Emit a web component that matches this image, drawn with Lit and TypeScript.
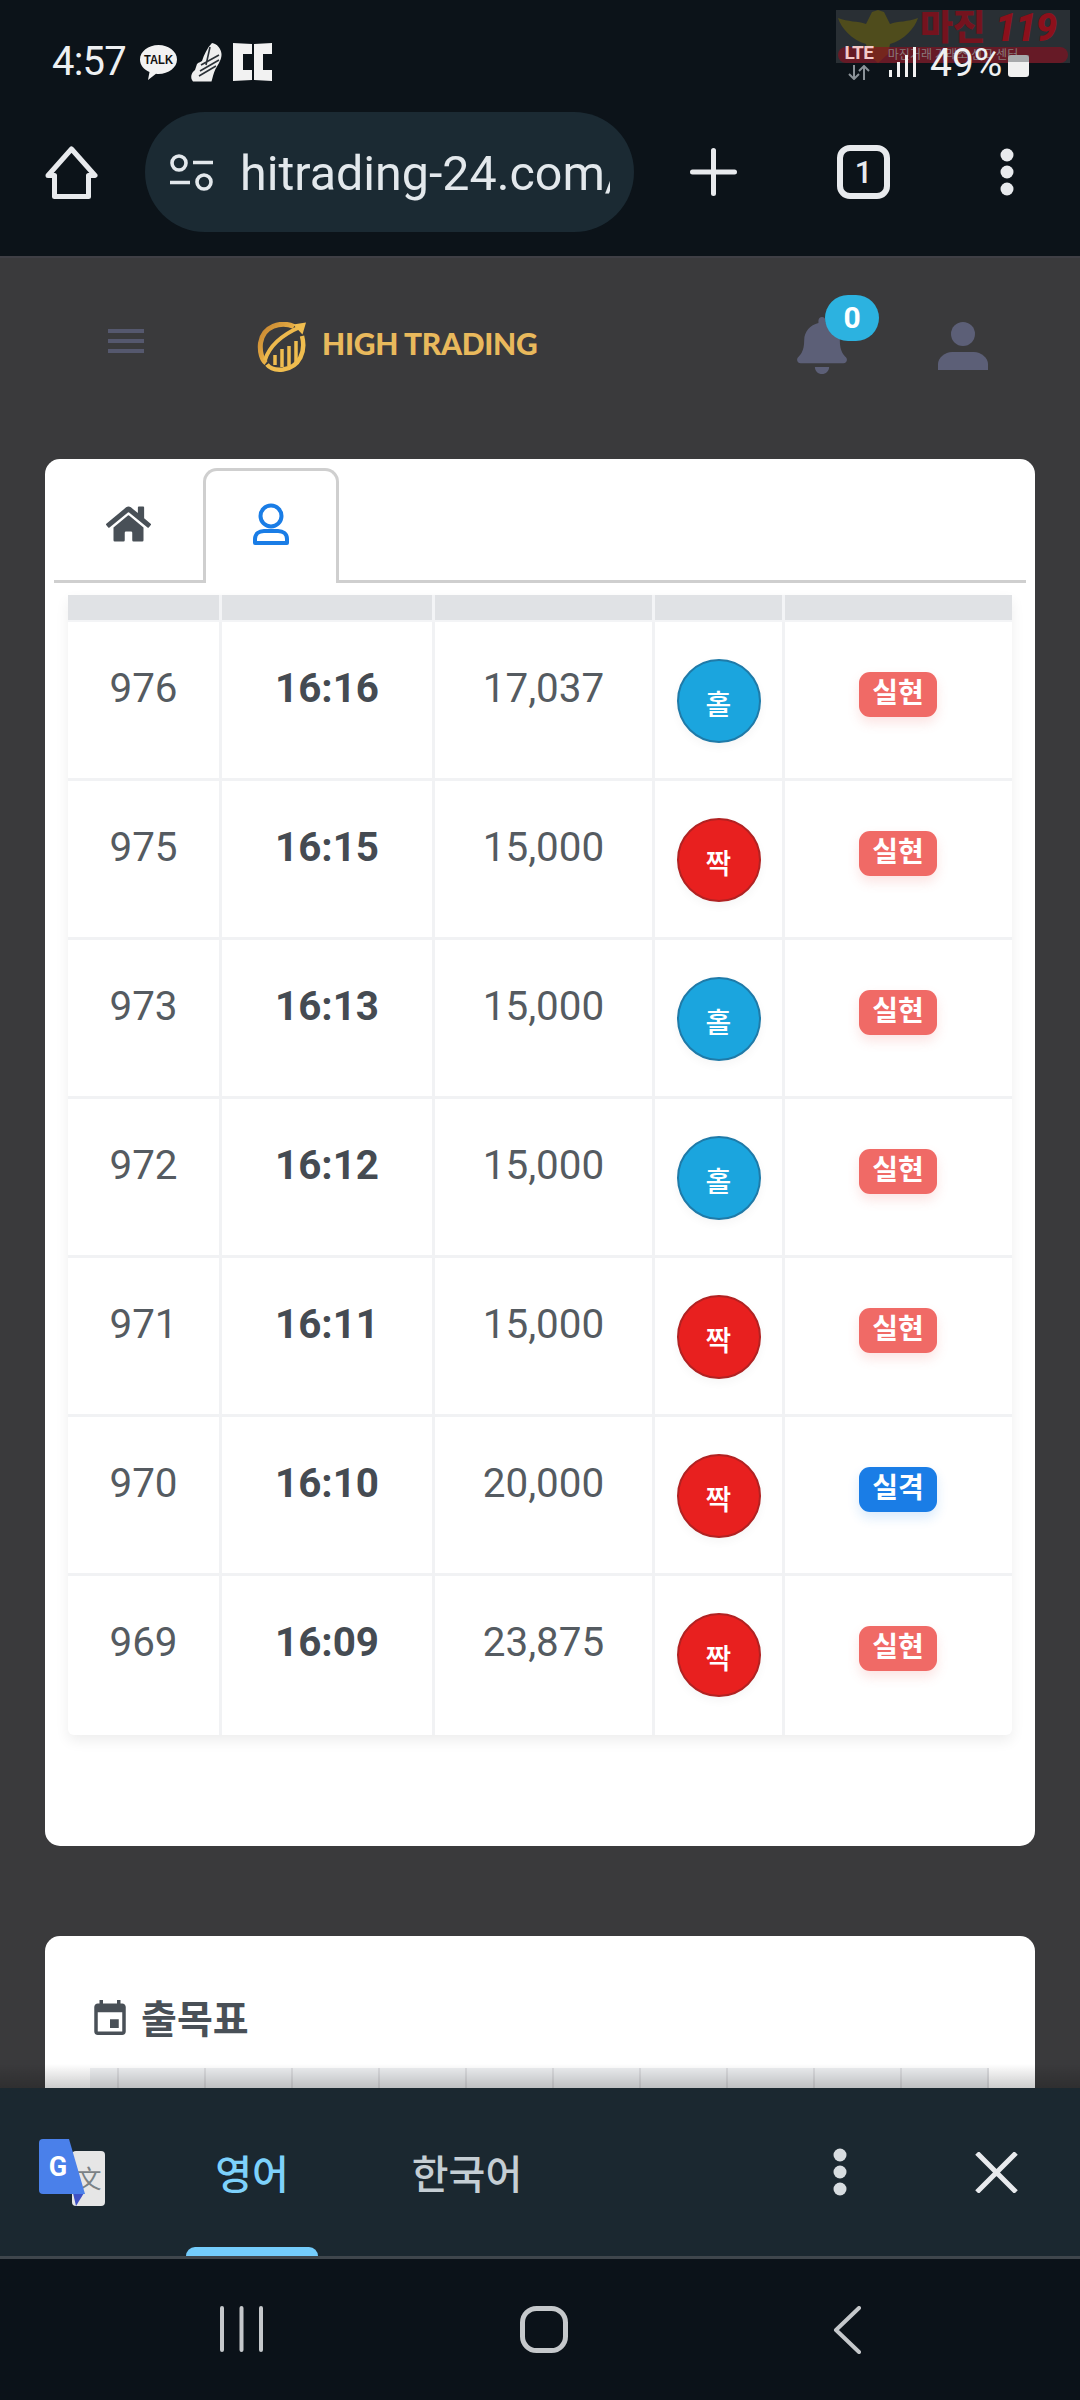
import { LitElement, html, css, svg } from "lit";
import { customElement } from "lit/decorators.js";

type Row = { id: string; time: string; amount: string; side: "홀" | "짝"; result: "실현" | "실격"; };

const ROWS: Row[] = [
  { id: "976", time: "16:16", amount: "17,037", side: "홀", result: "실현" },
  { id: "975", time: "16:15", amount: "15,000", side: "짝", result: "실현" },
  { id: "973", time: "16:13", amount: "15,000", side: "홀", result: "실현" },
  { id: "972", time: "16:12", amount: "15,000", side: "홀", result: "실현" },
  { id: "971", time: "16:11", amount: "15,000", side: "짝", result: "실현" },
  { id: "970", time: "16:10", amount: "20,000", side: "짝", result: "실격" },
  { id: "969", time: "16:09", amount: "23,875", side: "짝", result: "실현" },
];

const dots = svg`<svg width="14" height="48" viewBox="0 0 14 48"><circle cx="7" cy="7" r="6.5"/><circle cx="7" cy="24" r="6.5"/><circle cx="7" cy="41" r="6.5"/></svg>`;

@customElement("app-root")
export class AppRoot extends LitElement {
  static styles = css`
    :host { display: flex; flex-direction: column; width: 1080px; height: 2400px; overflow: hidden; position: relative; background: #3a3a3c; font-family: Roboto, "Noto Sans CJK KR", sans-serif; color: #495057; }
    svg { display: block; flex: none; }
    .top { background: #0c1319; flex: none; }
    .status { height: 90px; display: flex; align-items: flex-start; color: #eef0f2; padding-left: 52px; box-sizing: border-box; position: relative; z-index: 2; }
    .time { font-size: 40px; line-height: 40px; margin-top: 42px; letter-spacing: -0.8px; width: 88px; }
    .talk { margin-top: 45px; }
    .shoe { margin: 43px 0 0 13px; }
    .cc { margin: 43px 0 0 11px; }
    .sys { margin-left: auto; display: flex; align-items: flex-start; padding-right: 51px; position: relative; }
    .net { width: 32px; margin-top: 43px; font-size: 19px; line-height: 20px; font-weight: 700; color: #f3c9c9; letter-spacing: -0.5px; display: flex; flex-direction: column; align-items: center; }
    .sig { margin: 47px 0 0 14px; }
    .pct { font-size: 39px; line-height: 40px; margin: 43px 0 0 13px; width: 78px; white-space: nowrap; }
    .batt { margin: 55px 0 0 0; }
    .mark { position: absolute; left: 836px; top: 10px; width: 234px; height: 53px; background: rgba(160,160,160,.2); overflow: hidden; z-index: 1; }
    .mark .ma { position: absolute; left: 84px; top: 1px; font-size: 36px; line-height: 34px; font-weight: 900; color: #75131e; letter-spacing: -0.5px; white-space: nowrap; }
    .mark .no { position: absolute; left: 159px; top: 0; font-size: 38px; line-height: 36px; font-weight: 900; font-style: italic; color: #8c101b; letter-spacing: -1px; white-space: nowrap; }
    .mark .strip { position: absolute; left: 2px; right: 2px; top: 37px; height: 16px; border-radius: 8px; background: rgba(140,15,30,.62); color: #8a7b7c; font-size: 12px; line-height: 16px; text-align: center; white-space: nowrap; }
    .toolbar { height: 166px; box-sizing: border-box; display: flex; align-items: center; padding: 0 0 2px 45px; }
    .pill { width: 489px; height: 120px; border-radius: 60px; background: #1b2a33; margin-left: 47px; display: flex; align-items: center; padding-left: 25px; box-sizing: border-box; flex: none; }
    .url { width: 370px; margin-left: 27px; padding-top: 3px; overflow: hidden; white-space: nowrap; font-size: 48.4px; line-height: 60px; color: #e3e8ec; }
    .plus { margin-left: 56px; }
    .tabs-btn { margin-left: 100px; position: relative; width: 53px; height: 54px; display: flex; align-items: center; justify-content: center; box-sizing: border-box; border: 6px solid #e8eaed; border-radius: 13px; color: #e8eaed; font-size: 31px; font-weight: 500; }
    .tb-dots { margin-left: 110px; fill: #e8eaed; }
    .divider { height: 2px; background: #3f3f45; flex: none; }

    .main { flex: 1; min-height: 0; overflow: hidden; }
    .hdr { height: 201px; display: flex; align-items: flex-start; position: relative; }
    .burger { margin: 71px 0 0 108px; width: 36px; display: flex; flex-direction: column; gap: 6px; }
    .burger i { display: block; height: 4px; background: #55586e; }
    .logo { margin: 64px 0 0 113px; display: flex; align-items: flex-start; gap: 15px; }
    .logo-t { font-family: Lato, sans-serif; font-weight: 900; font-size: 30px; line-height: 42px; color: #e9b95c; letter-spacing: -0.3px; white-space: nowrap; width: 216px; }
    .bell { position: absolute; left: 797px; top: 59px; }
    .count { position: absolute; left: 825px; top: 37px; width: 54px; height: 46px; border-radius: 23px; background: #2cb2e0; color: #fff; font-size: 30px; font-weight: 700; line-height: 46px; text-align: center; }
    .person { position: absolute; left: 938px; top: 64px; }

    .card { margin: 0 45px; background: #fff; border-radius: 15px; }
    .c1 { height: 1387px; padding-top: 9px; box-sizing: border-box; }
    .tabs { margin: 0 9px; height: 115px; box-sizing: border-box; border-bottom: 3px solid #cfcfcf; display: flex; align-items: stretch; }
    .tab { width: 149px; display: flex; align-items: center; justify-content: center; box-sizing: border-box; }
    .tab.on { width: 136px; height: 115px; border: 3px solid #cfcfcf; border-bottom: 0; border-radius: 14px 14px 0 0; background: #fff; padding-bottom: 7px; }
    .tbl { margin: 12px 0 0 23px; width: 944px; box-shadow: 0 6px 14px rgba(0,0,0,.07); border-radius: 0 0 6px 6px; }
    .g { display: grid; grid-template-columns: 154px 213px 220px 130px 227px; }
    .hd { height: 27px; }
    .hd div { background: #e0e2e5; border-right: 3px solid #f3f4f6; border-bottom: 2px solid #f3f4f6; }
    .hd div:last-child { border-right: 0; }
    .rw { height: 159px; box-sizing: border-box; }
    .rw > div { border-right: 3px solid #f1f2f4; border-bottom: 3px solid #f1f2f4; box-sizing: border-box; display: flex; justify-content: center; align-items: flex-start; }
    .rw > div:last-child { border-right: 0; padding-right: 1px; }
    .rw:last-child > div { border-bottom: 0; }
    .n { font-size: 40.4px; line-height: 46px; padding-top: 44px; color: #555b61; }
    .n.b { font-weight: 700; color: #454b52; }
    .cc2 { padding-top: 37px; }
    .ball { width: 84px; height: 84px; box-sizing: border-box; border-radius: 50%; border: 2px solid; color: #fff; font-size: 28px; font-weight: 500; display: flex; align-items: center; justify-content: center; box-shadow: 0 4px 10px rgba(0,0,0,.04); }
    .ball.odd { background: #1ba5de; border-color: #1f7aa8; }
    .ball.even { background: #e8201f; border-color: #b12222; }
    .ball span { position: relative; top: 2px; }
    .bd { margin-top: 50px; width: 78px; height: 45px; border-radius: 11px; color: #fff; font-size: 28px; font-weight: 700; line-height: 43px; text-align: center; }
    .bd.ok { background: #f06a66; box-shadow: 0 6px 12px rgba(240,106,102,.18); }
    .bd.no { background: #1a7de6; box-shadow: 0 6px 12px rgba(26,125,230,.16); }

    .c2 { margin-top: 90px; height: 300px; padding: 64px 0 0 49px; box-sizing: border-box; }
    .att { display: flex; align-items: center; gap: 15px; font-size: 39px; line-height: 40px; font-weight: 700; color: #495057; }
    .att svg { position: relative; top: -3px; }
    .cal { display: grid; margin: 28px 0 0 -4px; width: 900px; height: 40px; grid-template-columns: 29px repeat(10, 87px); }
    .cal div { background: #eef0f2; border-right: 2px solid #dcdde0; box-sizing: border-box; }

    .trans { height: 168px; flex: none; background: #1b2830; display: flex; align-items: center; position: relative; }
    .trans::before { content: ""; position: absolute; left: 0; right: 0; top: -24px; height: 24px; background: linear-gradient(rgba(0,0,0,0), rgba(0,0,0,.2)); }
    .gt { margin: 0 0 0 39px; }
    .lang { position: relative; height: 168px; display: flex; align-items: center; justify-content: center; font-size: 40px; font-weight: 500; font-family: "Noto Sans CJK KR", sans-serif; color: #c5ced4; box-sizing: border-box; }
    .lang.en { margin-left: 81px; width: 132px; color: #7dd1fb; }
    .lang.ko { margin-left: 95px; width: 108px; white-space: nowrap; }
    .lang.en::after { content: ""; position: absolute; left: 0; right: 0; bottom: 0; height: 9px; background: #74cdfc; border-radius: 9px 9px 0 0; }
    .tr-dots { margin-left: 312px; fill: #d8dde0; }
    .tr-x { margin-left: 128px; }
    .rule { height: 3px; background: #3f464c; flex: none; }
    .nav { height: 141px; flex: none; background: #0b1219; display: flex; align-items: flex-start; padding: 47px 0 0 220px; box-sizing: border-box; }
    .nav-o { margin-left: 257px; }
    .nav-b { margin-left: 265px; }
  `;

  private icon = {
    talk: html`<svg class="talk" width="37" height="35" viewBox="0 0 37 35"><path fill="#f2f2f2" d="M18.5 0C8.3 0 0 6.500 0 14.500 0 20 3.800 24.600 9.500 27L8 35l8-6.200c.8.100 1.700.200 2.500.200C28.700 29 37 22.500 37 14.500S28.700 0 18.500 0z"/><text x="18.500" y="19" text-anchor="middle" font-family="Liberation Sans" font-size="12" font-weight="700" textLength="29" lengthAdjust="spacingAndGlyphs" fill="#111">TALK</text></svg>`,
    shoe: html`<svg class="shoe" width="32" height="39" viewBox="0 0 32 39"><path fill="#efefef" d="M22 0c5 1 9 5 9.500 11 .3 5-3 10-6 15-2 4-3 9-4 12.500L3 38.500C0 35 1 30 5 27l2-6c2-2 4-2 5-3 2-6 5-13 10-18z"/><path stroke="#2a3036" stroke-width="1.600" fill="none" d="M29 12L11 22M29 17L10 28M26 23L9 33M20 4l-4 18"/></svg>`,
    cc: html`<svg class="cc" width="39" height="38" viewBox="0 0 39 38"><path fill="#f2f2f2" d="M0 0l19 1v10h-9v16h9v10l-19 1zM21 1l18-1v11h-9v16h9v11l-18-1z"/></svg>`,
    eagle: html`<svg width="80" height="53" viewBox="0 0 80 53" style="margin-left:2px"><path fill="#4f4c1c" d="M0 8c10 4 20 3 28 6l6-12 6-2 6 2 6 12c8-3 18-2 28-6-3 10-14 22-28 26l-2 10-10 9-10-9-2-10C14 30 3 18 0 8z"/></svg>`,
    sig: html`<svg class="sig" width="28" height="30" viewBox="0 0 28 30" fill="#f2f2f2"><rect x="0" y="23" width="3" height="7"/><rect x="8" y="15" width="3" height="15"/><rect x="16" y="8" width="3" height="22"/><rect x="24" y="0" width="3" height="30"/></svg>`,
    arrows: html`<svg width="22" height="15" viewBox="0 0 22 15" fill="none" stroke="#8b9298" stroke-width="2" style="margin-top:2px"><path d="M6 0v14M1 9l5 5 5-5M16 15V1M11 6l5-5 5 5"/></svg>`,
    batt: html`<svg class="batt" width="21" height="22" viewBox="0 0 21 22"><rect width="21" height="22" rx="3" fill="#f0f0f0"/><rect width="21" height="7" fill="#6c6f72" opacity=".55"/></svg>`,
    home: html`<svg width="53" height="53" viewBox="0 0 53 53" fill="none" stroke="#e8eaed" stroke-width="5" stroke-linejoin="round"><path d="M26.500 3L50 29.500h-6.500V50.500h-34V29.500H3z"/></svg>`,
    tune: html`<svg width="43" height="37" viewBox="0 0 43 37" fill="none" stroke="#e3e8ec" stroke-width="3.600"><circle cx="9" cy="9" r="7"/><path d="M23 8.500h20M0 28.500h20"/><circle cx="34" cy="28" r="7"/></svg>`,
    plus: html`<svg class="plus" width="47" height="48" viewBox="0 0 47 48" stroke="#e8eaed" stroke-width="5" stroke-linecap="round"><path d="M23.500 2.500v43M2.500 24h42"/></svg>`,
    logo: html`<svg width="50" height="50" viewBox="0 0 50 50" fill="none"><defs><linearGradient id="lg" x1="0" y1="0" x2="1" y2="1"><stop offset="0" stop-color="#c4822f"/><stop offset=".6" stop-color="#ecb448"/><stop offset="1" stop-color="#f6cd63"/></linearGradient></defs><path stroke="url(#lg)" stroke-width="5" d="M37 4.500C24 -1 6 4 3.500 21 2.500 30 5 38 9 41"/><path stroke="#f0bd4f" stroke-width="4.500" d="M45 14c4 15-2 31-19 33.500-7 .8-13-1-16-5"/><path stroke="#eeb94d" stroke-width="4" d="M8 38C13 22 27 12 43 5"/><path fill="#f0bd4f" d="M49 .5l-13 2 9.500 10z"/><path stroke="#f0bd4f" stroke-width="3.500" d="M18 43V33M25 45V27M32 44V24M39 40V19"/></svg>`,
    bell: html`<svg class="bell" width="50" height="57" viewBox="0 0 448 512" fill="#5c5f77"><path d="M224 512c35.320 0 63.970-28.650 63.970-64H160.030c0 35.350 28.650 64 63.970 64zm215.390-149.710c-19.320-20.760-55.470-51.990-55.470-154.290 0-77.700-54.480-139.900-127.940-155.160V32c0-17.670-14.320-32-31.980-32s-31.980 14.330-31.980 32v20.840C118.560 68.100 64.080 130.300 64.080 208c0 102.300-36.150 133.530-55.470 154.290-6 6.450-8.660 14.160-8.610 21.710.11 16.400 12.980 32 32.100 32h383.800c19.120 0 32-15.600 32.100-32 .05-7.550-2.610-15.270-8.610-21.710z"/></svg>`,
    person: html`<svg class="person" width="50" height="48" viewBox="0 0 50 48" fill="#5c5f77"><circle cx="25" cy="12" r="12"/><path d="M0 48v-6c0-6 7-12 14-12h22c7 0 14 6 14 12v6z"/></svg>`,
    fahome: html`<svg width="45" height="40" viewBox="0 0 576 512" fill="#495057"><path d="M280.370 148.260L96 300.110V464a16 16 0 0 0 16 16l112.060-.29a16 16 0 0 0 15.920-16V368a16 16 0 0 1 16-16h64a16 16 0 0 1 16 16v95.640a16 16 0 0 0 16 16.050L464 480a16 16 0 0 0 16-16V300L295.670 148.260a12.190 12.190 0 0 0-15.300 0zM571.600 251.470L488 182.560V44.050a12 12 0 0 0-12-12h-56a12 12 0 0 0-12 12v72.610L318.470 43a48 48 0 0 0-61 0L4.340 251.470a12 12 0 0 0-1.600 16.900l25.500 31A12 12 0 0 0 45.150 301l235.220-193.740a12.190 12.190 0 0 1 15.300 0L530.900 301a12 12 0 0 0 16.900-1.600l25.500-31a12 12 0 0 0-1.700-16.930z"/></svg>`,
    user: html`<svg width="36" height="42" viewBox="0 0 36 42" fill="none" stroke="#1a7de6" stroke-width="4"><circle cx="18" cy="13" r="10.500"/><path d="M2 40v-4c0-5 4-8 9-8h14c5 0 9 3 9 8v4z" stroke-linejoin="round"/></svg>`,
    event: html`<svg width="32" height="35" viewBox="3 1 18 20" fill="#495057"><path d="M17 12h-5v5h5v-5zM16 1v2H8V1H6v2H5c-1.110 0-1.990.9-1.990 2L3 19c0 1.100.89 2 2 2h14c1.100 0 2-.9 2-2V5c0-1.100-.9-2-2-2h-1V1h-2zm3 18H5V8h14v11z"/></svg>`,
    gt: html`<svg class="gt" width="66" height="67" viewBox="0 0 66 67"><rect x="33" y="12" width="33" height="55" rx="4" fill="#e6e6e6"/><text x="50" y="49" text-anchor="middle" font-family="Noto Sans CJK SC" font-size="25" fill="#7b8285">文</text><path fill="#3f51c4" d="M34 54h11l-8 13z"/><path fill="#4a80ea" d="M4 0h26l16 55H4a4 4 0 0 1-4-4V4a4 4 0 0 1 4-4z"/><text x="19" y="37" text-anchor="middle" font-family="Roboto" font-weight="700" font-size="27" fill="#fff">G</text></svg>`,
    close: html`<svg class="tr-x" width="43" height="41" viewBox="0 0 43 41" stroke="#e8eaed" stroke-width="5"><path d="M2 1l39 39M41 1L2 40"/></svg>`,
    recent: html`<svg width="43" height="46" viewBox="0 0 43 46" stroke="#c5c8cb" stroke-width="4" stroke-linecap="round"><path d="M2 2v42M21.500 2v42M41 2v42"/></svg>`,
    circle: html`<svg class="nav-o" width="48" height="47" viewBox="0 0 48 47" fill="none" stroke="#c5c8cb" stroke-width="5"><rect x="2.500" y="2.500" width="43" height="42" rx="14"/></svg>`,
    back: html`<svg class="nav-b" width="29" height="48" viewBox="0 0 29 48" fill="none" stroke="#c5c8cb" stroke-width="4" stroke-linecap="round" stroke-linejoin="round"><path d="M26 2L3 24l23 22" /></svg>`,
  };

  render() {
    const i = this.icon;
    return html`
      <div class="top">
        <div class="status">
          <div class="time">4:57</div>${i.talk}${i.shoe}${i.cc}
          <div class="sys">
            <div class="net">LTE${i.arrows}</div>${i.sig}
            <div class="pct">49%</div>${i.batt}
          </div>
        </div>
        <div class="toolbar">
          ${i.home}
          <div class="pill">${i.tune}<div class="url">hitrading-24.com/</div></div>
          ${i.plus}
          <div class="tabs-btn">1</div>
          <div class="tb-dots">${dots}</div>
        </div>
      </div>
      <div class="divider"></div>
      <div class="mark">${i.eagle}<span class="ma">마진</span><span class="no">119</span><div class="strip">마진거래 거래소 신고 센터</div></div>
      <div class="main">
        <div class="hdr">
          <div class="burger"><i></i><i></i><i></i></div>
          <div class="logo">${i.logo}<div class="logo-t">HIGH TRADING</div></div>
          ${i.bell}<div class="count">0</div>${i.person}
        </div>
        <div class="card c1">
          <div class="tabs">
            <div class="tab">${i.fahome}</div>
            <div class="tab on">${i.user}</div>
          </div>
          <div class="tbl">
            <div class="g hd"><div></div><div></div><div></div><div></div><div></div></div>
            ${ROWS.map((r) => html`
              <div class="g rw">
                <div class="n">${r.id}</div>
                <div class="n b">${r.time}</div>
                <div class="n">${r.amount}</div>
                <div class="cc2"><div class="ball ${r.side === "홀" ? "odd" : "even"}"><span>${r.side}</span></div></div>
                <div><div class="bd ${r.result === "실현" ? "ok" : "no"}">${r.result}</div></div>
              </div>`)}
          </div>
        </div>
        <div class="card c2">
          <div class="att">${i.event}<span>출목표</span></div>
          <div class="cal">${Array.from({ length: 11 }).map(() => html`<div></div>`)}</div>
        </div>
      </div>
      <div class="trans">
        ${i.gt}
        <div class="lang en">영어</div>
        <div class="lang ko">한국어</div>
        <div class="tr-dots">${dots}</div>
        ${i.close}
      </div>
      <div class="rule"></div>
      <div class="nav">${i.recent}${i.circle}${i.back}</div>
    `;
  }
}
